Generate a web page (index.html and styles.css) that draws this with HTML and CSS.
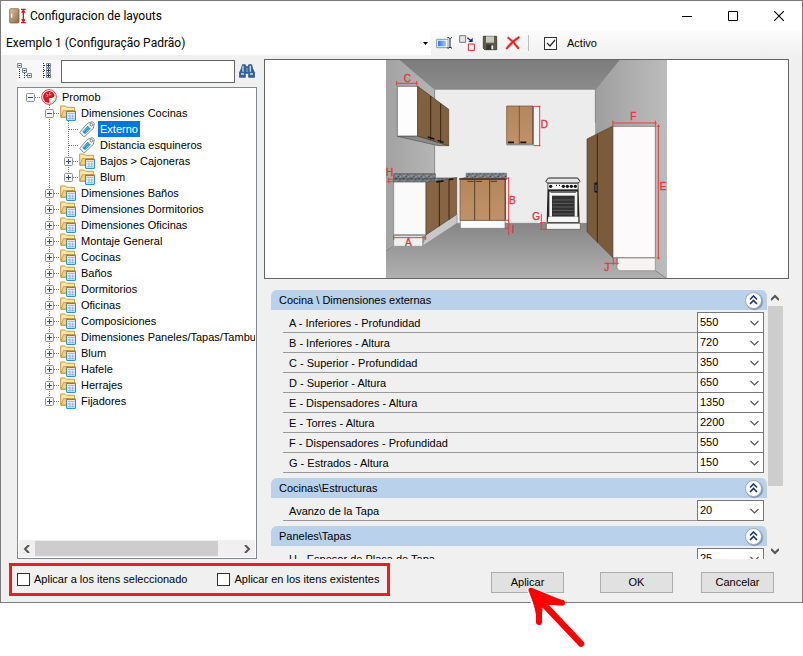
FILE: index.html
```html
<!DOCTYPE html>
<html lang="es">
<head>
<meta charset="utf-8">
<title>Configuracion de layouts</title>
<link rel="stylesheet" href="styles.css">
</head>
<body>
<svg class="sprite" aria-hidden="true">
  <symbol id="folder" viewBox="0 0 48 48">
    <path d="M2 36V3h14l4 4h24v27l-6 3H2z" fill="#fbe8a4" stroke="#d09a45" stroke-width="3"/>
    <path d="M3 36l7-19h34v19z" fill="#f5d173" stroke="#d09a45" stroke-width="3"/>
    <path d="M20 19h26v27H20z" fill="#fff" stroke="#0b7fbd" stroke-width="3"/>
    <path d="M24 23h19v4H24z" fill="#f3b53c"/>
    <path d="M24 33h19M24 40h19M30 28v16M38 28v16" stroke="#8db9e8" stroke-width="3"/>
  </symbol>
  <symbol id="tag" viewBox="0 0 48 48">
    <path d="M2 34L25 7 40 2l6 5-3 15-25 24h-5z" fill="#f5f5f5" stroke="#8b8b8b" stroke-width="3"/>
    <path d="M10 32l16-18 9 9-17 17z" fill="#2590cf"/>
    <path d="M15 31l12-12M19 35l12-12" stroke="#9fd7f4" stroke-width="2"/>
    <circle cx="37" cy="11" r="4" fill="#fff" stroke="#777" stroke-width="3"/>
  </symbol>
  <symbol id="plus" viewBox="0 0 9 9"><rect x=".5" y=".5" width="8" height="8" rx="1" fill="#f5f5f5" stroke="#919191"/><path d="M2 4.500h5M4.500 2v5" stroke="#34488a"/></symbol>
  <symbol id="minus" viewBox="0 0 9 9"><rect x=".5" y=".5" width="8" height="8" rx="1" fill="#f5f5f5" stroke="#919191"/><path d="M2 4.500h5" stroke="#34488a"/></symbol>
  <symbol id="collapse" viewBox="0 0 9 10"><path d="M1 4.500L4.500 1 8 4.500M1 9L4.500 5.500 8 9" fill="none" stroke="#1c3470" stroke-width="1.600"/></symbol>
  <symbol id="chevron" viewBox="0 0 8 8"><path d="M6 0L2 4l4 4" fill="none" stroke="#555" stroke-width="2"/></symbol>
</svg>

<div class="window">
  <header class="titlebar">
    <svg class="app-icon" viewBox="0 0 51 48" aria-hidden="true">
      <defs><linearGradient id="door" x1="0" x2="1" y2="1"><stop stop-color="#dcc2a0"/><stop offset="1" stop-color="#8d6743"/></linearGradient></defs>
      <rect x="2" y="2" width="28" height="43" rx="3" fill="url(#door)" stroke="#6f5237" stroke-width="2"/>
      <path d="M8 17v12" stroke="#fff" stroke-width="4"/>
      <path d="M36 4h14M36 44h14M43 5v38M38 14l5-7 5 7M38 34l5 7 5-7" fill="none" stroke="#d8101f" stroke-width="4"/>
    </svg>
    <h1 class="title">Configuracion de layouts</h1>
    <div class="caption-buttons">
      <button type="button" aria-label="Minimizar"><svg viewBox="0 0 10 10"><path d="M0 5.500h10" stroke="#000"/></svg></button>
      <button type="button" aria-label="Maximizar"><svg viewBox="0 0 10 10"><path d="M.5.5h9v9h-9z" fill="none" stroke="#000"/></svg></button>
      <button type="button" aria-label="Cerrar"><svg viewBox="0 0 10 10"><path d="M0 0l10 10M10 0L0 10" stroke="#000" stroke-width="1.100"/></svg></button>
    </div>
  </header>

  <div class="toolbar">
    <select class="layout-select" aria-label="Layout"><option>Exemplo 1 (Configuração Padrão)</option></select>
    <div class="tools">
      <button type="button" aria-label="Renombrar"><svg viewBox="0 0 48 48"><defs><linearGradient id="bl"><stop stop-color="#3578e5"/><stop offset="1" stop-color="#a9c7f5"/></linearGradient></defs><path d="M2 13h34v25H2z" fill="#fff" stroke="#8099bb" stroke-width="3"/><path d="M6 17h24v17H6z" fill="url(#bl)"/><path d="M34 8h5l3 3 3-3h3M42 10v27M34 39h5l3-3 3 3h3" fill="none" stroke="#222" stroke-width="3"/></svg></button>
      <button type="button" aria-label="Duplicar"><svg viewBox="0 0 48 48"><path d="M2 2h18v20H2z" fill="#e5e5ea" stroke="#777" stroke-width="3"/><path d="M28 27h18v19H28z" fill="#f4f4f4" stroke="#e5202b" stroke-width="3"/><path d="M25 8l11 9" fill="none" stroke="#172a82" stroke-width="4"/><path d="M41 8v13H28z" fill="#172a82"/></svg></button>
      <button type="button" aria-label="Guardar"><svg viewBox="0 0 48 48"><path d="M4 4h40v40H8l-4-4z" fill="#5d5d49" stroke="#454539" stroke-width="3"/><path d="M12 4h24v19H12z" fill="#c7c9bd"/><path d="M13 29h23v15H13z" fill="#343434"/><path d="M28 31h6v12h-6z" fill="#eee"/></svg></button>
      <button type="button" aria-label="Eliminar"><svg viewBox="0 0 48 48"><path d="M8 7c10 7 22 18 33 34M43 6C28 15 15 27 4 42" fill="none" stroke="#ff9d99" stroke-width="8"/><path d="M8 7c10 7 22 18 33 34M43 6C28 15 15 27 4 42" fill="none" stroke="#ed1c1c" stroke-width="5"/></svg></button>
    </div>
    <label class="check active-check"><input type="checkbox" checked><span>Activo</span></label>
  </div>

  <main class="content">
    <section class="browser" aria-label="Layouts">
      <div class="search-row">
        <div class="tree-tools">
          <button type="button" aria-label="Contraer todo"><svg viewBox="0 0 16 16"><path d="M2.500 6v10M7.500 10v6" stroke="#333" stroke-dasharray="1 1"/><path d="M9 12.500h2" stroke="#333" stroke-dasharray="1 1"/><g fill="#fff" stroke="#7c8797"><path d="M.5.500h4v4h-4zM5.500 5.500h4v4h-4zM10.500 10.500h4v4h-4z"/></g><path d="M1.500 2.500h2M6.500 7.500h2M11.500 12.500h2" stroke="#23385f"/></svg></button>
          <button type="button" aria-label="Expandir todo"><svg viewBox="0 0 16 16"><path d="M4.500 0v16M5 2.500h2M5 7.500h2M5 12.500h2" stroke="#333" stroke-dasharray="1 1"/><g fill="#fff" stroke="#7c8797"><path d="M7.500.500h4v4h-4zM7.500 5.500h4v4h-4zM7.500 10.500h4v4h-4z"/></g><path d="M8 2.500h3M8 7.500h3M8 12.500h3M9.500 1v3M9.500 6v3M9.500 11v3" stroke="#23385f"/></svg></button>
        </div>
        <input class="search" type="text" aria-label="Buscar">
        <button class="find" type="button" aria-label="Buscar"><svg viewBox="0 0 48 48"><path d="M10 5h9l2 6h6l2-6h9l3 12 6 13v13H29V31H19v12H1V30l6-13z" fill="#36619b" stroke="#1e447d" stroke-width="2"/><path d="M12 8v18M34 8v18M6 33h9M33 33h9" stroke="#c4dcf5" stroke-width="4"/><path d="M24 14v13" stroke="#7ba1cd" stroke-width="4"/></svg></button>
      </div>
      <div class="tree-box">
        <ul class="tree">
          <li>
            <div class="node"><svg class="exp"><use href="#minus"/></svg><svg class="icon" viewBox="0 0 48 48"><circle cx="24" cy="24" r="22" fill="#fff" stroke="#e23b43" stroke-width="3"/><circle cx="24" cy="24" r="18" fill="#d71925"/><path d="M25 42V27h7c8-1 10-8 7-14 7 12 2 27-14 29z" fill="#fff"/><path d="M15 14l6 4-4 6M27 9l-3 9 7-2" fill="none" stroke="#f6a1a5" stroke-width="3"/></svg><span>Promob</span></div>
            <ul>
              <li>
                <div class="node"><svg class="exp"><use href="#minus"/></svg><svg class="icon"><use href="#folder"/></svg><span>Dimensiones Cocinas</span></div>
                <ul>
                  <li><div class="node leaf"><svg class="icon"><use href="#tag"/></svg><span class="selected">Externo</span></div></li>
                  <li><div class="node leaf"><svg class="icon"><use href="#tag"/></svg><span>Distancia esquineros</span></div></li>
                  <li><div class="node"><svg class="exp"><use href="#plus"/></svg><svg class="icon"><use href="#folder"/></svg><span>Bajos &gt; Cajoneras</span></div></li>
                  <li><div class="node"><svg class="exp"><use href="#plus"/></svg><svg class="icon"><use href="#folder"/></svg><span>Blum</span></div></li>
                </ul>
              </li>
              <li><div class="node"><svg class="exp"><use href="#plus"/></svg><svg class="icon"><use href="#folder"/></svg><span>Dimensiones Baños</span></div></li>
              <li><div class="node"><svg class="exp"><use href="#plus"/></svg><svg class="icon"><use href="#folder"/></svg><span>Dimensiones Dormitorios</span></div></li>
              <li><div class="node"><svg class="exp"><use href="#plus"/></svg><svg class="icon"><use href="#folder"/></svg><span>Dimensiones Oficinas</span></div></li>
              <li><div class="node"><svg class="exp"><use href="#plus"/></svg><svg class="icon"><use href="#folder"/></svg><span>Montaje General</span></div></li>
              <li><div class="node"><svg class="exp"><use href="#plus"/></svg><svg class="icon"><use href="#folder"/></svg><span>Cocinas</span></div></li>
              <li><div class="node"><svg class="exp"><use href="#plus"/></svg><svg class="icon"><use href="#folder"/></svg><span>Baños</span></div></li>
              <li><div class="node"><svg class="exp"><use href="#plus"/></svg><svg class="icon"><use href="#folder"/></svg><span>Dormitorios</span></div></li>
              <li><div class="node"><svg class="exp"><use href="#plus"/></svg><svg class="icon"><use href="#folder"/></svg><span>Oficinas</span></div></li>
              <li><div class="node"><svg class="exp"><use href="#plus"/></svg><svg class="icon"><use href="#folder"/></svg><span>Composiciones</span></div></li>
              <li><div class="node"><svg class="exp"><use href="#plus"/></svg><svg class="icon"><use href="#folder"/></svg><span>Dimensiones Paneles/Tapas/Tambu</span></div></li>
              <li><div class="node"><svg class="exp"><use href="#plus"/></svg><svg class="icon"><use href="#folder"/></svg><span>Blum</span></div></li>
              <li><div class="node"><svg class="exp"><use href="#plus"/></svg><svg class="icon"><use href="#folder"/></svg><span>Hafele</span></div></li>
              <li><div class="node"><svg class="exp"><use href="#plus"/></svg><svg class="icon"><use href="#folder"/></svg><span>Herrajes</span></div></li>
              <li><div class="node"><svg class="exp"><use href="#plus"/></svg><svg class="icon"><use href="#folder"/></svg><span>Fijadores</span></div></li>
            </ul>
          </li>
        </ul>
        <div class="hscroll" aria-hidden="true">
          <svg class="arrow"><use href="#chevron"/></svg><div class="hthumb"></div><svg class="arrow right"><use href="#chevron"/></svg>
        </div>
      </div>
    </section>

    <section class="details">
      <div class="preview">
        <svg class="kitchen" viewBox="18 12 843 654" role="img" aria-label="Cocina con cotas">
          <defs>
            <linearGradient id="floor" x2="0" y2="1"><stop stop-color="#868686"/><stop offset="1" stop-color="#b0b0b0"/></linearGradient>
            <linearGradient id="ceil" x2="0" y2="1"><stop stop-color="#7c7c7c"/><stop offset="1" stop-color="#8b8b8b"/></linearGradient>
            <linearGradient id="lwall"><stop stop-color="#a2a2a2"/><stop offset="1" stop-color="#bdbdbd"/></linearGradient>
            <linearGradient id="rwall"><stop stop-color="#9f9f9f"/><stop offset="1" stop-color="#bcbcbc"/></linearGradient>
            <linearGradient id="wood" x2="0" y2="1"><stop stop-color="#b4865d"/><stop offset="1" stop-color="#c1926a"/></linearGradient>
            <pattern id="granite" width="23" height="17" patternUnits="userSpaceOnUse"><path d="M0 0h23v17H0z" fill="#737a80"/><path d="M1 1h4v3H1zM13 4h5v3h-5zM6 12h4v3H6zM18 12h3v2h-3z" fill="#b4babe"/><path d="M7 3h5v3H7zM0 8h4v4H0zM16 9h4v2h-4zM12 14h4v2h-4z" fill="#3e4449"/></pattern>
          </defs>
          <path d="M18 12h843v654H18z" fill="#a9a9a9"/>
          <path d="M18 584L225 502h420l212 164H18z" fill="url(#floor)"/>
          <path d="M60 12h658l-73 88H164z" fill="url(#ceil)"/>
          <path d="M164 100h482v402H164z" fill="#ececec"/>
          <path d="M18 12h42l104 88v402h61L18 584z" fill="url(#lwall)"/>
          <path d="M164 360h75v142h-75z" fill="#ececec"/>
          <path d="M718 12h143v654h-4L646 502V100z" fill="url(#rwall)"/>
          <path d="M60 12l104 88h482l72-88M164 100v265M646 100v100M225 502h395M18 584l22-12M826 644l32 22" fill="none" stroke="#777" stroke-width="2"/>

          <path d="M52 241l61-1 93 29h-31z" fill="#8a8a8a" stroke="#555" stroke-width="2"/>
          <path d="M52 91h61v149H52z" fill="#fdfdfd" stroke="#555" stroke-width="2"/>
          <path d="M113 91l93 69v109l-93-29z" fill="#80613f" stroke="#4b3626" stroke-width="2"/>
          <path d="M152 120v132M182 143v118" stroke="#362318" stroke-width="3"/>
          <path d="M143 243l20 6M173 253l18 6" stroke="#111" stroke-width="4"/>

          <path d="M460 151h20v117h-20z" fill="#f4f4f4"/>
          <path d="M380 150h79v115h-79z" fill="url(#wood)" stroke="#6b4930" stroke-width="2"/>
          <path d="M418 150v115" stroke="#5a3c27" stroke-width="2"/><path d="M459 150v118" stroke="#444" stroke-width="3"/>
          <path d="M380 266h80" stroke="#888" stroke-width="4"/><path d="M384 259h18M421 259h18" stroke="#151515" stroke-width="5"/>

          <path d="M137 537l94-62v27L127 571z" fill="#c8c8c8" stroke="#888" stroke-width="2"/>
          <path d="M41 539h87v32H41z" fill="#f0f0f0" stroke="#888" stroke-width="2"/>
          <path d="M41 376h97v160H41z" fill="#fafafa" stroke="#777" stroke-width="2"/>
          <path d="M138 378l92-13v110l-92 61z" fill="#876544" stroke="#5b4333" stroke-width="2"/>
          <path d="M178 373v138M207 368v123" stroke="#39271b" stroke-width="3"/>
          <path d="M41 353h125v13h65l-91 12H41z" fill="url(#granite)" stroke="#555" stroke-width="2"/>
          <path d="M41 369h123" stroke="#333" stroke-width="2"/>
          <path d="M169 378l22-3M207 371l13-2" stroke="#111" stroke-width="4"/>

          <path d="M241 493h134v24H241z" fill="#fbfbfb" stroke="#777" stroke-width="2"/>
          <path d="M240 370h135v123H240z" fill="url(#wood)" stroke="#6a4c37" stroke-width="2"/>
          <path d="M284 372v121M329 372v121M376 368v124" stroke="#593d29" stroke-width="3"/>
          <path d="M262 376h19M287 376h19M332 376h19" stroke="#40352d" stroke-width="3"/>
          <path d="M258 351h122v17H238l20-4z" fill="url(#granite)" stroke="#555" stroke-width="1"/><path d="M238 369h142" stroke="#333" stroke-width="4"/>

          <path d="M499 502h102v18H499z" fill="#f5f5f5" stroke="#555" stroke-width="2"/>
          <path d="M503 378h92l4 122h-99z" fill="#252525"/>
          <path d="M505 366h88l7 10-5 5h-92l-6-5z" fill="#e5e5e5" stroke="#222" stroke-width="3"/>
          <path d="M505 383h88v17h-88z" fill="#f8f8f8"/>
          <g fill="#111"><circle cx="512" cy="391" r="5"/><circle cx="550" cy="391" r="5"/><circle cx="562" cy="391" r="5"/><circle cx="574" cy="391" r="5"/><circle cx="586" cy="391" r="5"/><path d="M528 386h3v4h-3zM537 386h3v4h-3z"/></g>
          <path d="M508 407h84v75h-84z" fill="#f4f4f4"/><path d="M516 419h68v63h-68z" fill="#303030"/>
          <path d="M518 432h63M518 442h63M518 453h63M518 463h63M518 474h63" stroke="#777" stroke-width="2"/>
          <path d="M512 409h76" stroke="#555" stroke-width="3"/><path d="M505 482h90v16h-92z" fill="#f6f6f6"/>

          <path d="M621 249l78-39v395l-78-78z" fill="#7a5b3c" stroke="#55402f" stroke-width="2"/>
          <path d="M652 235v324" stroke="#3f2b1d" stroke-width="3"/><path d="M643 381l9-3v33l-9-3z" fill="#171717"/><path d="M648 386v19" stroke="#aaa" stroke-width="2"/>
          <path d="M699 211h127v394H699z" fill="#fcfafa" stroke="#6a5f5a" stroke-width="2"/>
          <path d="M711 606h115v38H717l-6-8z" fill="#f6f3f2" stroke="#888" stroke-width="2"/>

          <g class="dims">
            <path d="M48 82h65M50 75v14M110 75v14M39 545h99M41 537v15M137 537v15M22 370h18M22 377h18M26 365v17"/>
            <path d="M461 151h20M461 269h20M479 149v122M375 367h12M386 364v173M375 493h12M375 517h12"/>
            <path d="M484 474v48M480 500h18M480 520h18M697 201h133M699 194v18M826 194v18M830 211h10M835 205v405M830 606h10M673 622h43M700 605v22M711 605v22"/>
          </g>
          <g class="dim-text">
            <text x="71" y="78">C</text><text x="75" y="569">A</text><text x="18" y="359">H</text><text x="482" y="215">D</text><text x="387" y="443">B</text><text x="395" y="532">I</text><text x="457" y="493">G</text><text x="751" y="192">F</text><text x="839" y="402">E</text><text x="673" y="646">J</text>
          </g>
        </svg>
      </div>

      <div class="params">
        <div class="groups">
          <section class="group">
            <div class="group-head"><h2>Cocina \ Dimensiones externas</h2><button type="button" aria-label="Contraer"><svg><use href="#collapse"/></svg></button></div>
            <div class="rows">
              <div class="row"><label for="p1">A - Inferiores - Profundidad</label><select id="p1"><option>550</option></select></div>
              <div class="row"><label for="p2">B - Inferiores - Altura</label><select id="p2"><option>720</option></select></div>
              <div class="row"><label for="p3">C - Superior - Profundidad</label><select id="p3"><option>350</option></select></div>
              <div class="row"><label for="p4">D - Superior - Altura</label><select id="p4"><option>650</option></select></div>
              <div class="row"><label for="p5">E - Dispensadores - Altura</label><select id="p5"><option>1350</option></select></div>
              <div class="row"><label for="p6">E - Torres - Altura</label><select id="p6"><option>2200</option></select></div>
              <div class="row"><label for="p7">F - Dispensadores - Profundidad</label><select id="p7"><option>550</option></select></div>
              <div class="row"><label for="p8">G - Estrados - Altura</label><select id="p8"><option>150</option></select></div>
            </div>
          </section>
          <section class="group">
            <div class="group-head"><h2>Cocinas\Estructuras</h2><button type="button" aria-label="Contraer"><svg><use href="#collapse"/></svg></button></div>
            <div class="rows">
              <div class="row"><label for="p9">Avanzo de la Tapa</label><select id="p9"><option>20</option></select></div>
            </div>
          </section>
          <section class="group">
            <div class="group-head"><h2>Paneles\Tapas</h2><button type="button" aria-label="Contraer"><svg><use href="#collapse"/></svg></button></div>
            <div class="rows">
              <div class="row"><label for="p10">H - Espesor de Placa de Tapa</label><select id="p10"><option>25</option></select></div>
            </div>
          </section>
        </div>
        <div class="vscroll" aria-hidden="true">
          <svg class="arrow up"><use href="#chevron"/></svg><div class="vtrack"><div class="vthumb"></div></div><svg class="arrow down"><use href="#chevron"/></svg>
        </div>
      </div>
    </section>
  </main>

  <footer class="footer">
    <div class="apply-options">
      <label class="check"><input type="checkbox"><span>Aplicar a los itens seleccionado</span></label>
      <label class="check"><input type="checkbox"><span>Aplicar en los itens existentes</span></label>
    </div>
    <div class="actions">
      <div class="pointed">
        <button class="btn" type="button">Aplicar</button>
        <svg class="pointer" viewBox="171 138 180 192" aria-hidden="true">
          <g stroke-linecap="round" stroke-linejoin="round">
            <path d="M182 150l94 37-48 6 106 119-115-111-11 44z" fill="#fff" stroke="#fff" stroke-width="20"/>
            <path d="M182 150l94 38-52 0-13 11-4 47c-1-36-9-60-25-96z" fill="#f00" stroke="#f00" stroke-width="14"/>
            <path d="M215 186l118 125" stroke="#f00" stroke-width="19"/>
            <path d="M207 220v26M250 186l26 2" stroke="#f00" stroke-width="18"/>
          </g>
        </svg>
      </div>
      <button class="btn" type="button">OK</button>
      <button class="btn cancel" type="button">Cancelar</button>
    </div>
  </footer>
</div>
</body>
</html>
```

FILE: styles.css
```css
* { box-sizing: border-box; }

body {
  margin: 0;
  height: 100vh;
  padding-bottom: 53px;
  background: #fff;
  color: #000;
  font: 11px/16px "Liberation Sans", Arial, sans-serif;
}

button, select, input { font: inherit; color: inherit; margin: 0; }
button { padding: 0; border: 0; background: none; }
svg { display: block; }
.sprite { position: absolute; width: 0; height: 0; }

.window {
  display: flex;
  flex-direction: column;
  height: 100%;
  border: 1px solid #7c7c7c;
  background: #f0f0f0;
}

.titlebar {
  display: flex;
  align-items: center;
  flex: 0 0 30px;
  padding-left: 8px;
  background: #fff;
}
.app-icon { width: 17px; height: 16px; }
.title {
  margin: 0 0 0 4px;
  font: 12px/16px Roboto, sans-serif;
}
.caption-buttons { display: flex; margin-left: auto; }
.caption-buttons button {
  display: grid;
  place-items: center;
  width: 46px;
  height: 28px;
}
.caption-buttons svg { width: 10px; height: 10px; }

.toolbar {
  display: flex;
  align-items: center;
  flex: 0 0 24px;
  background: linear-gradient(#fcfcfc, #f1f1f1);
}
.layout-select {
  width: 430px;
  height: 24px;
  padding: 0 0 0 5px;
  border: 0;
  appearance: none;
  background: #fff url("data:image/svg+xml,%3Csvg xmlns='http://www.w3.org/2000/svg' width='5' height='3'%3E%3Cpath d='M0 0h5L2.500 3z'/%3E%3C/svg%3E") no-repeat right 3px center;
  font: 12px/16px Roboto, sans-serif;
}
.tools {
  display: flex;
  gap: 7px;
  padding: 0 7px 0 5px;
  border-right: 1px solid #bdbdbd;
}
.tools svg { width: 16px; height: 16px; }

.check { display: flex; align-items: center; gap: 4px; }
.check input {
  appearance: none;
  flex: none;
  width: 13px;
  height: 13px;
  border: 1px solid #333;
  background: #fff;
}
.check input:checked {
  background: #fff url("data:image/svg+xml,%3Csvg xmlns='http://www.w3.org/2000/svg' viewBox='0 0 11 11'%3E%3Cpath d='M2 5l3 3 5-6' fill='none' stroke='%23222' stroke-width='1.200'/%3E%3C/svg%3E") center / 11px 11px no-repeat;
}
.active-check { gap: 10px; margin-left: 15px; }

.content {
  display: flex;
  gap: 7px;
  flex: 1;
  min-height: 0;
  padding: 4px 13px 0 16px;
}

.browser { display: flex; flex-direction: column; width: 240px; flex: none; }
.search-row { display: flex; align-items: center; height: 24px; margin-bottom: 4px; }
.tree-tools {
  display: flex;
  gap: 6px;
  width: 44px;
  padding: 3px 0;
  background: #f8f8f8;
}
.tree-tools svg { width: 16px; height: 16px; }
.search {
  flex: 1;
  min-width: 0;
  height: 23px;
  border: 1px solid #646464;
  background: #fff;
}
.find { margin: 0 2px 0 4px; }
.find svg { width: 16px; height: 16px; }

.tree-box {
  display: flex;
  flex-direction: column;
  flex: 1;
  min-height: 0;
  padding: 1px;
  border: 1px solid #828790;
  background: #fff;
}
.tree, .tree ul { margin: 0; padding: 0; list-style: none; }
.tree {
  flex: 1;
  min-height: 0;
  padding-left: 7px;
  overflow: hidden;
}
.tree ul { margin-left: 19px; }
.tree li { position: relative; }
.tree ul > li::before {
  content: "";
  position: absolute;
  top: 0;
  bottom: 0;
  left: 4px;
  width: 1px;
  background: repeating-linear-gradient(#777 0 1px, transparent 1px 2px);
}
.tree ul > li:last-child::before { bottom: auto; height: 8px; }
.node {
  position: relative;
  display: flex;
  align-items: center;
  height: 16px;
  white-space: nowrap;
  background: repeating-linear-gradient(90deg, #777 0 1px, transparent 1px 2px) 5px 8px / 10px 1px no-repeat;
}
.node.leaf { padding-left: 15px; }
.exp { flex: none; width: 9px; height: 9px; margin-right: 6px; }
.icon { width: 16px; height: 16px; flex: none; }
.node span { margin-left: 3px; padding: 0 2px; }
.node .selected { background: #0078d7; color: #fff; }

.hscroll { display: flex; align-items: center; flex: 0 0 17px; background: #f0f0f0; }
.arrow { width: 8px; height: 8px; flex: none; }
.hscroll .arrow { margin: 0 4px; }
.hthumb { width: 183px; height: 15px; margin-right: auto; background: #cdcdcd; }
.right { transform: rotate(180deg); }
.up { transform: rotate(90deg); }
.down { transform: rotate(270deg); }

.details { display: flex; flex-direction: column; flex: 1; min-width: 0; }
.preview {
  display: flex;
  justify-content: center;
  flex: none;
  border: 1px solid #646464;
  background: #fff;
}
.kitchen { width: 281px; height: 218px; }
.dims { fill: none; stroke: #ed3a40; stroke-width: 3; }
.dim-text { fill: #e8343a; stroke: #e8343a; stroke-width: 1; font: 30px "Liberation Sans", Arial, sans-serif; }

.params { display: flex; flex: 1; min-height: 0; margin: 11px 6px 0 7px; }
.groups { flex: 1; min-width: 0; overflow: hidden; }
.group { margin-bottom: 5px; }
.group-head {
  display: flex;
  align-items: center;
  justify-content: space-between;
  height: 20px;
  padding: 0 5px 0 8px;
  border-radius: 6px 6px 0 0;
  background: #b9d1ea;
}
.group-head h2 { margin: 0; font: inherit; }
.group-head button {
  display: grid;
  place-items: center;
  width: 17px;
  height: 17px;
  border: 1px solid #9aa7bb;
  border-radius: 50%;
  background: #fff;
  box-shadow: 1px 1px 1px #8090a8;
}
.group-head svg { width: 9px; height: 10px; }
.rows { padding: 3px 3px 0 12px; }
.row { display: flex; height: 20px; }
.row label {
  flex: 1;
  padding: 2px 0 0 6px;
  border-bottom: 1px solid #999;
}
.row select {
  width: 67px;
  height: 21px;
  margin-top: -1px;
  padding: 0 0 2px 2px;
  border: 1px solid #777;
  border-radius: 0;
  appearance: none;
  background: #fff url("data:image/svg+xml,%3Csvg xmlns='http://www.w3.org/2000/svg' width='9' height='6'%3E%3Cpath d='M.5 1l4 4 4-4' fill='none' stroke='%23555' stroke-width='1.200'/%3E%3C/svg%3E") no-repeat right 4px center;
}

.vscroll {
  display: flex;
  flex-direction: column;
  align-items: center;
  flex: 0 0 16px;
  padding: 4px 0;
}
.vtrack { flex: 1; align-self: stretch; margin: 4px 0 4px 1px; }
.vthumb { height: 76%; background: #cdcdcd; }

.footer {
  display: flex;
  align-items: flex-start;
  justify-content: space-between;
  flex: 0 0 43px;
  padding: 4px 28px 0 8px;
}
.apply-options {
  display: flex;
  gap: 30px;
  height: 33px;
  padding: 0 8px 0 5px;
  border: 3px solid #ed1c24;
}
.apply-options span { padding-bottom: 2px; }
.actions { display: flex; gap: 36px; padding-top: 9px; }
.pointed { position: relative; }
.pointer { position: absolute; left: 36px; top: 14px; width: 60px; height: 64px; }
.btn {
  display: block;
  width: 73px;
  height: 21px;
  padding-bottom: 2px;
  border: 1px solid #adadad;
  background: #e1e1e1;
}
.cancel { margin-left: -8px; }
```
